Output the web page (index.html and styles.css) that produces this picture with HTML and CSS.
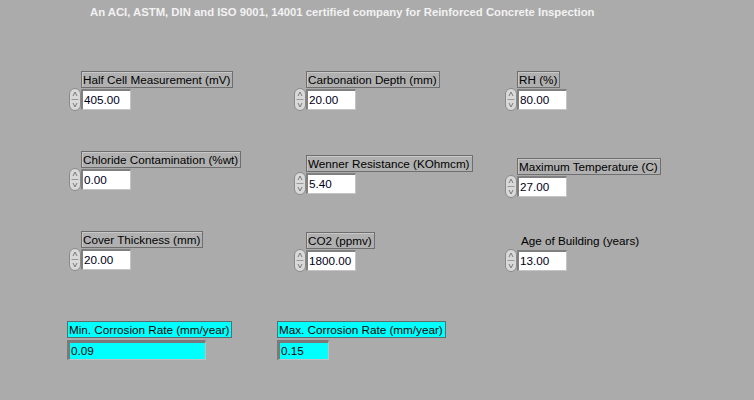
FILE: index.html
```html
<!DOCTYPE html>
<html>
<head>
<meta charset="utf-8">
<link rel="stylesheet" href="styles.css">
</head>
<body>
<div class="panel">
  <div class="header">An ACI, ASTM, DIN and ISO 9001, 14001 certified company for Reinforced Concrete Inspection</div>
  <div class="controls">
    <div class="row row1">
      <div class="cell c1">
        <div class="ctl">
          <div class="lbl">Half Cell Measurement (mV)</div>
          <div class="num"><svg class="spin" viewBox="0 0 12 23"><rect x="0.5" y="0.5" width="11" height="22" rx="5.5" fill="#d9d9d9" stroke="#8a8a8a"/><path d="M6 4 L4 8 M6 4 L8 8" stroke="#7a7a7a" fill="none"/><line x1="2.5" y1="11.5" x2="9.5" y2="11.5" stroke="#9a9a9a"/><path d="M6 19 L4 15 M6 19 L8 15" stroke="#7a7a7a" fill="none"/></svg><div class="box">405.00</div></div>
        </div>
      </div>
      <div class="cell c2">
        <div class="ctl">
          <div class="lbl">Carbonation Depth (mm)</div>
          <div class="num"><svg class="spin" viewBox="0 0 12 23"><rect x="0.5" y="0.5" width="11" height="22" rx="5.5" fill="#d9d9d9" stroke="#8a8a8a"/><path d="M6 4 L4 8 M6 4 L8 8" stroke="#7a7a7a" fill="none"/><line x1="2.5" y1="11.5" x2="9.5" y2="11.5" stroke="#9a9a9a"/><path d="M6 19 L4 15 M6 19 L8 15" stroke="#7a7a7a" fill="none"/></svg><div class="box">20.00</div></div>
        </div>
      </div>
      <div class="cell c3">
        <div class="ctl">
          <div class="lbl">RH (%)</div>
          <div class="num"><svg class="spin" viewBox="0 0 12 23"><rect x="0.5" y="0.5" width="11" height="22" rx="5.5" fill="#d9d9d9" stroke="#8a8a8a"/><path d="M6 4 L4 8 M6 4 L8 8" stroke="#7a7a7a" fill="none"/><line x1="2.5" y1="11.5" x2="9.5" y2="11.5" stroke="#9a9a9a"/><path d="M6 19 L4 15 M6 19 L8 15" stroke="#7a7a7a" fill="none"/></svg><div class="box">80.00</div></div>
        </div>
      </div>
    </div>
    <div class="row">
      <div class="cell c1">
        <div class="ctl">
          <div class="lbl">Chloride Contamination (%wt)</div>
          <div class="num"><svg class="spin" viewBox="0 0 12 23"><rect x="0.5" y="0.5" width="11" height="22" rx="5.5" fill="#d9d9d9" stroke="#8a8a8a"/><path d="M6 4 L4 8 M6 4 L8 8" stroke="#7a7a7a" fill="none"/><line x1="2.5" y1="11.5" x2="9.5" y2="11.5" stroke="#9a9a9a"/><path d="M6 19 L4 15 M6 19 L8 15" stroke="#7a7a7a" fill="none"/></svg><div class="box">0.00</div></div>
        </div>
      </div>
      <div class="cell c2 dn4">
        <div class="ctl">
          <div class="lbl">Wenner Resistance (KOhmcm)</div>
          <div class="num"><svg class="spin" viewBox="0 0 12 23"><rect x="0.5" y="0.5" width="11" height="22" rx="5.5" fill="#d9d9d9" stroke="#8a8a8a"/><path d="M6 4 L4 8 M6 4 L8 8" stroke="#7a7a7a" fill="none"/><line x1="2.5" y1="11.5" x2="9.5" y2="11.5" stroke="#9a9a9a"/><path d="M6 19 L4 15 M6 19 L8 15" stroke="#7a7a7a" fill="none"/></svg><div class="box">5.40</div></div>
        </div>
      </div>
      <div class="cell c3 dn7">
        <div class="ctl">
          <div class="lbl">Maximum Temperature (C)</div>
          <div class="num"><svg class="spin" viewBox="0 0 12 23"><rect x="0.5" y="0.5" width="11" height="22" rx="5.5" fill="#d9d9d9" stroke="#8a8a8a"/><path d="M6 4 L4 8 M6 4 L8 8" stroke="#7a7a7a" fill="none"/><line x1="2.5" y1="11.5" x2="9.5" y2="11.5" stroke="#9a9a9a"/><path d="M6 19 L4 15 M6 19 L8 15" stroke="#7a7a7a" fill="none"/></svg><div class="box">27.00</div></div>
        </div>
      </div>
    </div>
    <div class="row">
      <div class="cell c1">
        <div class="ctl">
          <div class="lbl">Cover Thickness (mm)</div>
          <div class="num"><svg class="spin" viewBox="0 0 12 23"><rect x="0.5" y="0.5" width="11" height="22" rx="5.5" fill="#d9d9d9" stroke="#8a8a8a"/><path d="M6 4 L4 8 M6 4 L8 8" stroke="#7a7a7a" fill="none"/><line x1="2.5" y1="11.5" x2="9.5" y2="11.5" stroke="#9a9a9a"/><path d="M6 19 L4 15 M6 19 L8 15" stroke="#7a7a7a" fill="none"/></svg><div class="box">20.00</div></div>
        </div>
      </div>
      <div class="cell c2 dn1">
        <div class="ctl">
          <div class="lbl">CO2 (ppmv)</div>
          <div class="num"><svg class="spin" viewBox="0 0 12 23"><rect x="0.5" y="0.5" width="11" height="22" rx="5.5" fill="#d9d9d9" stroke="#8a8a8a"/><path d="M6 4 L4 8 M6 4 L8 8" stroke="#7a7a7a" fill="none"/><line x1="2.5" y1="11.5" x2="9.5" y2="11.5" stroke="#9a9a9a"/><path d="M6 19 L4 15 M6 19 L8 15" stroke="#7a7a7a" fill="none"/></svg><div class="box">1800.00</div></div>
        </div>
      </div>
      <div class="cell c3 dn1">
        <div class="ctl">
          <div class="lbl plain">Age of Building (years)</div>
          <div class="num"><svg class="spin" viewBox="0 0 12 23"><rect x="0.5" y="0.5" width="11" height="22" rx="5.5" fill="#d9d9d9" stroke="#8a8a8a"/><path d="M6 4 L4 8 M6 4 L8 8" stroke="#7a7a7a" fill="none"/><line x1="2.5" y1="11.5" x2="9.5" y2="11.5" stroke="#9a9a9a"/><path d="M6 19 L4 15 M6 19 L8 15" stroke="#7a7a7a" fill="none"/></svg><div class="box">13.00</div></div>
        </div>
      </div>
    </div>
    <div class="row out-row">
      <div class="cell o1">
        <div class="ctl">
          <div class="lbl cyan">Min. Corrosion Rate (mm/year)</div>
          <div class="obox wide">0.09</div>
        </div>
      </div>
      <div class="cell o2">
        <div class="ctl">
          <div class="lbl cyan">Max. Corrosion Rate (mm/year)</div>
          <div class="obox">0.15</div>
        </div>
      </div>
    </div>
  </div>
</div>
</body>
</html>
```

FILE: styles.css
```css
html, body {
  margin: 0;
  padding: 0;
}
body {
  width: 754px;
  height: 400px;
  overflow: hidden;
  background: #ababab;
  font-family: "Liberation Sans", Arial, sans-serif;
  font-size: 11.7px;
  color: #000;
}
.panel {
  width: 754px;
  height: 400px;
}
.header {
  height: 25px;
  padding: 5px 0 0 90px;
  box-sizing: border-box;
  font-family: "Liberation Sans", Arial, sans-serif;
  font-weight: bold;
  font-size: 11.3px;
  color: #f2f2f2;
  line-height: 14px;
}
.controls {
  display: flex;
  flex-direction: column;
  padding-top: 46px;
}
.row {
  display: flex;
  height: 80px;
  padding-left: 69px;
}
.cell.c1 { width: 225px; }
.cell.c2 { width: 211px; }
.cell.c3 { width: 200px; }
.dn1 { margin-top: 1px; }
.dn4 { margin-top: 4px; }
.dn7 { margin-top: 7px; }
.ctl {
  display: flex;
  flex-direction: column;
  align-items: flex-start;
}
.lbl {
  margin-left: 12px;
  height: 17px;
  box-sizing: border-box;
  line-height: 15px;
  padding: 0 2px 0 1px;
  border: 1px solid #6e6e6e;
  background: #b0b0b0;
  box-shadow: inset 1px 1px 0 #c8c8c8;
  white-space: nowrap;
}
.lbl.plain {
  border-color: transparent;
  background: transparent;
  box-shadow: none;
  padding-left: 3px;
}
.num {
  display: flex;
  align-items: center;
  margin-top: 0;
}
.spin {
  width: 12px;
  height: 23px;
  display: block;
}
.box {
  width: 50px;
  height: 21px;
  box-sizing: border-box;
  background: #fff;
  border-top: 2px solid #808080;
  border-left: 2px solid #808080;
  border-right: 1px solid #c4c4c4;
  border-bottom: 1px solid #c4c4c4;
  padding-left: 1px;
  line-height: 18px;
  color: #000018;
}
.out-row {
  padding-left: 67px;
  padding-top: 10px;
}
.cell.o1 { width: 210px; }
.lbl.cyan {
  margin-left: 0;
  background: #00ffff;
  box-shadow: none;
  border-color: #5a6e6e;
}
.obox {
  margin-top: 2px;
  width: 52px;
  height: 20px;
  box-sizing: border-box;
  background: #00ffff;
  border-top: 3px solid #7a7a7a;
  border-left: 3px solid #7a7a7a;
  border-right: 1px solid #c0c0c0;
  border-bottom: 1px solid #c0c0c0;
  padding-left: 1px;
  line-height: 16px;
}
.obox.wide {
  width: 139px;
}
```
